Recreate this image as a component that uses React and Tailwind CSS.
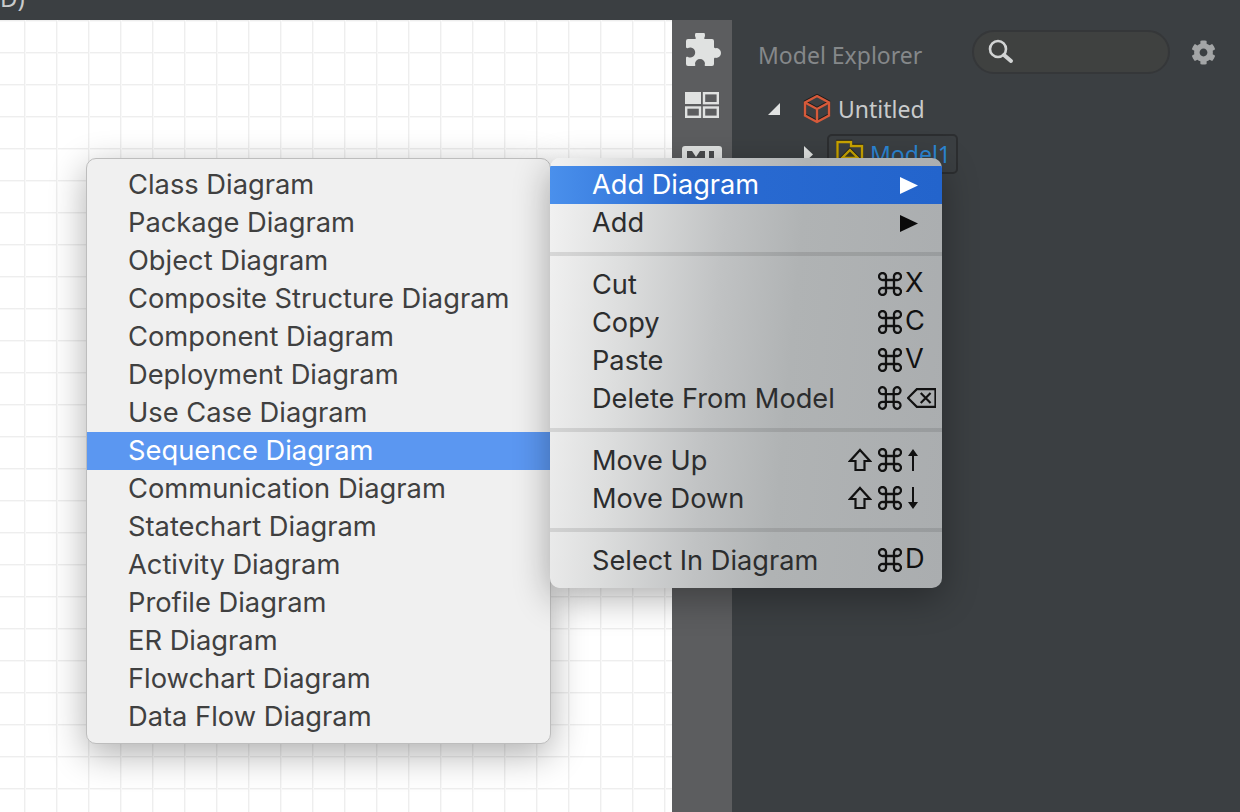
import { FaCog } from "react-icons/fa";

const diagrams = [
  "Class Diagram", "Package Diagram", "Object Diagram", "Composite Structure Diagram", "Component Diagram",
  "Deployment Diagram", "Use Case Diagram", "Sequence Diagram", "Communication Diagram", "Statechart Diagram",
  "Activity Diagram", "Profile Diagram", "ER Diagram", "Flowchart Diagram", "Data Flow Diagram",
];

const Cmd = () => (
  <svg width="24" height="24" viewBox="0 0 24 24" fill="none" stroke="#111" strokeWidth="2.3">
    <path d="M8 8 V5 A3.5 3.5 0 1 0 5 8 H19 A3.5 3.5 0 1 0 16 5 V19 A3.5 3.5 0 1 0 19 16 H5 A3.5 3.5 0 1 0 8 19 Z" />
  </svg>
);

const Shift = () => (
  <svg width="24" height="24" viewBox="0 0 24 24" className="mr-[6px]" fill="none" stroke="#111" strokeWidth="2.2">
    <path d="M12 2 L22 13 H16.5 V22 H7.5 V13 H2 Z" strokeLinejoin="miter" />
  </svg>
);

const Arrow = ({ down }) => (
  <svg width="14" height="24" viewBox="0 0 14 24" className={`ml-[4px] ${down ? "rotate-180" : ""}`} fill="#111">
    <path d="M7 1 L12 8 H8 V23 H6 V8 H2 Z" />
  </svg>
);

const Backspace = () => (
  <svg width="30" height="22" viewBox="0 0 30 22" className="ml-[5px]" fill="none" stroke="#111" strokeWidth="2.2">
    <path d="M29 2 H10 L1 11 L10 20 H29 Z" />
    <path d="M14 6 L24 16 M24 6 L14 16" />
  </svg>
);

function Row({ label, children }) {
  return (
    <div className="flex h-[38px] items-center justify-between pl-[42px] pr-[6px] text-[27.2px] text-[#2c2d2e]">
      <span>{label}</span>
      {children}
    </div>
  );
}

const Key = ({ k }) => (
  <div className="flex w-[58px] items-center pb-[3px]">
    <Cmd />
    <span className="ml-[3px] text-[#111]">{k}</span>
  </div>
);

const Separator = () => <div className="my-[10px] h-[4px] bg-black/10" />;

export default function App() {
  return (
    <div className="relative flex h-[812px] w-[1240px] flex-col overflow-hidden bg-[#3b3f42] font-['Inter',sans-serif]">
      <div className="h-5 shrink-0 overflow-hidden">
        <div className="mt-[-17px] font-['Noto_Sans',sans-serif] text-[24px] leading-[30px] text-[#c9cbcc]">D)</div>
      </div>

      <div className="flex min-h-0 flex-1">
        <div className="w-[672px] bg-white bg-[linear-gradient(to_right,#eeeeee_1px,#f8f8f8_1px,#f8f8f8_2px,transparent_2px),linear-gradient(to_bottom,#eeeeee_1px,#f8f8f8_1px,#f8f8f8_2px,transparent_2px)] bg-size-[32px_32px] bg-position-[24px_0px]" />

        <div className="flex w-[60px] flex-col items-center bg-[#5c5d5f] pt-[13px]">
          <svg width="36" height="36" viewBox="0 0 36 36" className="ml-[4px]" fill="#e0e2e1">
            <path d="M2 6 H9 C10 6 10 5 9.5 4.5 A5 5 0 1 1 18.5 4.5 C18 5 18 6 19 6 H26 Q28 6 28 8 V14 C28 15 29 15.5 30 15 A5 5 0 1 1 30 25 C29 24.5 28 25 28 26 V31 Q28 33 26 33 H19.5 C18.5 33 18.5 32 19 31 A5 5 0 1 0 9 31 C9.5 32 9.5 33 8.5 33 H2 Q0 33 0 31 V25 C0 24 1 23.5 2 24 A5 5 0 1 0 2 15 C1 15.5 0 15 0 14 V8 Q0 6 2 6 Z" />
          </svg>
          <svg width="34" height="26" viewBox="0 0 34 26" className="mt-[23px]" fill="none" stroke="#e0e2e1" strokeWidth="2.4">
            <rect x="0" y="0" width="16" height="12" fill="#e0e2e1" stroke="none" />
            <rect x="19" y="1.2" width="13.8" height="10" />
            <rect x="1.2" y="15.5" width="13.8" height="9.3" />
            <rect x="19" y="15.5" width="13.8" height="9.3" />
          </svg>
          <svg width="40" height="26" viewBox="0 0 40 26" className="mt-[28px]">
            <rect width="40" height="26" rx="3" fill="#e0e2e1" />
            <path d="M5 21 V5 H10 L14 11 L18 5 H23 V21 Z M27 5 H32 V21 H27 Z" fill="#4a4b4d" />
          </svg>
        </div>

        <div className="min-w-0 flex-1 pt-[10px]">
          <div className="flex h-[44px] items-center pl-[26px]">
            <span className="mt-[6px] w-[214px] font-['Noto_Sans',sans-serif] text-[23px] text-[#85888a]">Model Explorer</span>
            <div className="flex h-[44px] w-[198px] items-center rounded-[22px] border-2 border-[#353739] bg-[#3f4140] pl-[12px]">
              <svg width="28" height="28" viewBox="0 0 28 28" fill="none" stroke="#d2d4d4">
                <circle cx="12" cy="11" r="8" strokeWidth="2.6" />
                <path d="M18 17 L25 23" strokeWidth="4" strokeLinecap="round" />
              </svg>
            </div>
            <FaCog className="ml-[21px] h-[25px] w-[25px] text-[#a3a5a6]" />
          </div>

          <div className="mt-[20px] flex h-[30px] items-center pl-[35px]">
            <svg width="14" height="14" viewBox="0 0 14 14" fill="#e0e2e1"><path d="M13 1 V13 H1 Z" /></svg>
            <svg width="28" height="30" viewBox="0 0 28 30" className="ml-[22px] drop-shadow-[0_-1px_0_#1a1a1a]" fill="none" stroke="#d65a3a" strokeWidth="2.4">
              <path d="M14 2 L26 8.5 V21.5 L14 28 L2 21.5 V8.5 Z" />
              <path d="M2 8.5 L14 15 L26 8.5 M14 15 V28" />
            </svg>
            <span className="ml-[7px] font-['Noto_Sans',sans-serif] text-[23px] text-[#c9cbcc]">Untitled</span>
          </div>

          <div className="mt-[10px] flex items-center pl-[72px]">
            <svg width="9" height="17" viewBox="0 0 9 17" fill="#e0e2e1"><path d="M0 0 L9 8.5 L0 17 Z" /></svg>
            <div className="ml-[14px] flex h-[40px] w-[131px] items-center rounded-[5px] border-2 border-[#2c2e30] pl-[7px]">
              <svg width="28" height="28" viewBox="0 0 28 28" className="drop-shadow-[0_-1px_0_#1a1a1a]" fill="none" stroke="#c9a400" strokeWidth="2.4">
                <path d="M1.5 26 V2 H15 V6 H26 V26 Z" />
                <path d="M14 10 L22 18 H6 Z" fill="#3b3a20" />
              </svg>
              <span className="ml-[6px] font-['Noto_Sans',sans-serif] text-[23px] text-[#2b86d4]">Model1</span>
            </div>
          </div>
        </div>
      </div>

      <div className="absolute left-[86px] top-[158px] h-[586px] w-[465px] rounded-[10px] border border-[#bdbdbd] bg-[#f0f0f0] py-[7px] shadow-[0_10px_36px_rgba(0,0,0,0.32)]">
        {diagrams.map((d) => (
          <div key={d} className={`flex h-[38px] items-center pl-[41px] text-[27.3px] ${d === "Sequence Diagram" ? "bg-[#5b97f1] text-white" : "text-[#404040]"}`}>
            {d}
          </div>
        ))}
      </div>

      <div className="absolute left-[550px] top-[158px] h-[430px] w-[392px] overflow-hidden rounded-[10px] bg-[linear-gradient(95deg,#f2f2f2_0%,#dcdddd_20%,#c0c2c3_42%,#b0b3b4_60%,#aaadaf_100%)] pt-[8px] shadow-[0_10px_36px_rgba(0,0,0,0.32)]">
        <div className="flex h-[38px] items-center justify-between bg-[linear-gradient(90deg,#4a90ec,#2a6bd2_35%,#2364cc)] pl-[42px] pr-[24px] text-[27.2px] text-white">
          <span>Add Diagram</span>
          <svg width="18" height="17" viewBox="0 0 18 17" fill="#fff"><path d="M0 0 L18 8.5 L0 17 Z" /></svg>
        </div>
        <div className="flex h-[38px] items-center justify-between pl-[42px] pr-[24px] text-[27.2px] text-[#2c2d2e]">
          <span>Add</span>
          <svg width="18" height="17" viewBox="0 0 18 17" fill="#0a0a0a"><path d="M0 0 L18 8.5 L0 17 Z" /></svg>
        </div>
        <Separator />
        <Row label="Cut"><Key k="X" /></Row>
        <Row label="Copy"><Key k="C" /></Row>
        <Row label="Paste"><Key k="V" /></Row>
        <Row label="Delete From Model">
          <div className="flex w-[58px] items-center pb-[3px]"><Cmd /><Backspace /></div>
        </Row>
        <Separator />
        <Row label="Move Up">
          <div className="flex items-center pb-[3px] pr-[16px]"><Shift /><Cmd /><Arrow /></div>
        </Row>
        <Row label="Move Down">
          <div className="flex items-center pb-[3px] pr-[16px]"><Shift /><Cmd /><Arrow down /></div>
        </Row>
        <Separator />
        <Row label="Select In Diagram"><Key k="D" /></Row>
      </div>
    </div>
  );
}
